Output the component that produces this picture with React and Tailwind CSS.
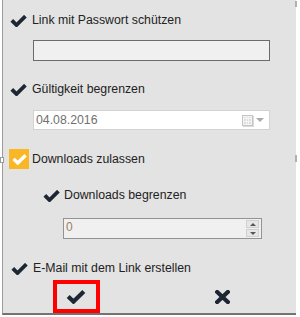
import React from 'react'

const Check = ({ className = '', color = '#1c2733', w = 17, h = 12 }) => (
  <svg width={w} height={h} viewBox="0 0 17 12" className={className}>
    <polyline points="1.8,5.3 6.5,10 15.4,1.2" fill="none" stroke={color} strokeWidth="3.8" strokeLinejoin="miter" />
  </svg>
)

function Row({ children, indent = 'pl-[7px]', className = '' }) {
  return <div className={`flex items-center h-[19px] ${indent} ${className}`}>{children}</div>
}

export default function App() {
  return (
    <div className="w-[300px] h-[317px] bg-white relative overflow-hidden font-['Liberation_Sans',Arial,sans-serif] text-[12.3px] text-[#222]">
      <div className="ml-[2px] w-[294px] h-[315px] bg-[#e3e3e3] border-l border-[#9c9c9c] border-b-2 border-b-[#737373] flex flex-col">
        <Row className="mt-[11px]">
          <Check />
          <span className="ml-[5px]">Link mit Passwort schützen</span>
        </Row>
        <div className="mt-[10px] ml-[30px] w-[237px] h-[21px] bg-[#f0f0f0] border border-[#6b6b6b]" />

        <Row className="mt-[19px]">
          <Check />
          <span className="ml-[5px]">Gültigkeit begrenzen</span>
        </Row>
        <div className="mt-[11px] ml-[30px] w-[237px] h-[20px] bg-white border border-[#d2d2d2] flex items-center pl-[2px] pr-[5px]">
          <span className="text-[#707070] flex-1">04.08.2016</span>
          <div className="w-[11px] h-[11px] border border-[#c4c4c4] bg-[#f4f4f4] grid grid-cols-3 gap-[1px] p-[1px] shadow-[1px_1px_0_#dcdcdc]">
            {Array.from({ length: 9 }).map((_, i) => (
              <div key={i} className="bg-[#dedede]" />
            ))}
          </div>
          <svg width="8" height="4" viewBox="0 0 8 4" className="ml-[3px]">
            <polygon points="0,0 8,0 4,4" fill="#a9ada4" />
          </svg>
        </div>

        <div className="mt-[19px] flex items-center h-[20px] pl-[6px]">
          <div className="w-[20px] h-[20px] bg-[#f9b625] flex items-center justify-center">
            <Check color="#ffffff" w={15} h={11} />
          </div>
          <span className="ml-[3px]">Downloads zulassen</span>
        </div>

        <Row className="mt-[17px]" indent="pl-[40px]">
          <Check />
          <span className="ml-[4px]">Downloads begrenzen</span>
        </Row>
        <div className="mt-[13px] ml-[60px] w-[199px] h-[21px] bg-[#f0f0f0] border border-[#939393] flex items-start pl-[2px] pr-[2px]">
          <span className="flex-1 text-[#9a7f62] text-[12px] leading-[14px] pt-[1px]">0</span>
          <div className="flex flex-col gap-[1px] pt-[1px]">
            <div className="w-[13px] h-[8px] bg-[#e6e6e6] border border-[#d0d0d0] flex items-center justify-center">
              <svg width="6" height="3" viewBox="0 0 6 3"><polygon points="0,3 6,3 3,0" fill="#555" /></svg>
            </div>
            <div className="w-[13px] h-[8px] bg-[#e6e6e6] border border-[#d0d0d0] flex items-center justify-center">
              <svg width="6" height="3" viewBox="0 0 6 3"><polygon points="0,0 6,0 3,3" fill="#555" /></svg>
            </div>
          </div>
        </div>

        <Row className="mt-[20px]" indent="pl-[8px]">
          <Check />
          <span className="ml-[5px]">E-Mail mit dem Link erstellen</span>
        </Row>

        <div className="mt-[2px] grid grid-cols-2 h-[33px]">
          <div className="flex justify-center">
            <button className="w-[47px] h-[33px] border-4 border-[#ff0000] flex items-center justify-center">
              <svg width="20" height="14" viewBox="0 0 20 14">
                <polyline points="2.2,6.5 7.5,11.6 17.8,1.6" fill="none" stroke="#1c2733" strokeWidth="4.2" />
              </svg>
            </button>
          </div>
          <div className="flex justify-center items-center">
            <svg width="15" height="14" viewBox="0 0 15 14">
              <path d="M2.2,2 L12.8,12 M12.8,2 L2.2,12" stroke="#1c2733" strokeWidth="4.2" strokeLinecap="square" fill="none" />
            </svg>
          </div>
        </div>
      </div>

      <div className="absolute left-0 top-[157px] w-[4px] h-[6px] bg-white border border-[#9c9c9c]" />
      <div className="absolute left-[295px] top-[155px] w-[2px] h-[7px] bg-[#b0b0b0]" />
      <div className="absolute left-[295px] top-[1px] w-[2px] h-[6px] bg-[#b0b0b0]" />
    </div>
  )
}
